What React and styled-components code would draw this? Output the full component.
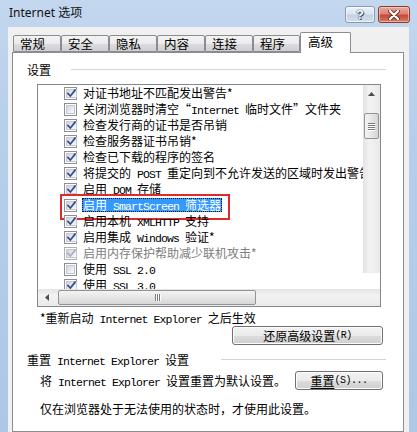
import React from "react";
import styled, { createGlobalStyle, css } from "styled-components";

const Global = createGlobalStyle`
  html, body { margin: 0; padding: 0; background: #b9d0eb; }
  body { font-family: "Noto Sans CJK SC", "Noto Sans", sans-serif; font-size: 12px; color: #000; }
  * { box-sizing: border-box; }
`;

const CJK = `"Noto Sans CJK SC", "Noto Sans", sans-serif`;

const Window = styled.div`
  width: 417px;
  height: 432px;
  overflow: hidden;
  display: flex;
  flex-direction: column;
  padding: 0 8px;
  background: linear-gradient(180deg, #c3d7ef 0%, #b7cfeb 30%, #adc7e7 100%);
`;

const TitleBar = styled.div`
  height: 27px;
  display: flex;
  align-items: center;
  justify-content: space-between;
  flex: none;
`;

const Title = styled.div`
  font-family: "Noto Sans", ${CJK};
  font-size: 12px;
  line-height: 14px;
  padding-left: 1px;
  padding-bottom: 1px;
  color: #111;
`;

const Caption = styled.div`
  display: flex;
  gap: 3px;
  margin-right: -1px;
  padding-top: 2px;
`;

const CaptionButton = styled.div`
  height: 17px;
  width: ${(p) => p.$w}px;
  border-radius: 3px;
  display: flex;
  align-items: center;
  justify-content: center;
  ${(p) =>
    p.$close
      ? css`
          border: 1px solid #8a3a31;
          background: linear-gradient(180deg, #e9a99b 0%, #d98474 45%, #c44a36 55%, #d67a64 100%);
          box-shadow: inset 0 0 0 1px rgba(255, 220, 210, 0.55);
        `
      : css`
          border: 1px solid #8a9bb1;
          background: linear-gradient(180deg, #eef3f9 0%, #d9e4f0 45%, #c3d3e5 55%, #d3dfed 100%);
          box-shadow: inset 0 0 0 1px rgba(255, 255, 255, 0.6);
        `}
`;

const HelpGlyph = styled.span`
  font-family: "Liberation Sans", sans-serif;
  font-weight: bold;
  font-size: 13px;
  line-height: 13px;
  color: #fff;
  text-shadow: 0 0 1px #2d3b4e, 0 0 1px #2d3b4e, 1px 1px 0 #4b5a6e;
`;

const Client = styled.div`
  flex: 1;
  background: #f0f0f0;
  display: flex;
  flex-direction: column;
  padding-top: 5px;
  min-height: 0;
`;

const TabStrip = styled.div`
  display: flex;
  align-items: flex-end;
  height: 21px;
  padding-left: 5px;
  margin-bottom: -1px;
  position: relative;
  z-index: 1;
  flex: none;
`;

const Tab = styled.div`
  width: ${(p) => p.$w}px;
  border: 1px solid #898c95;
  border-radius: 2px 2px 0 0;
  font-family: ${CJK};
  font-size: 12.5px;
  padding-left: 6px;
  display: flex;
  align-items: center;
  ${(p) =>
    p.$active
      ? css`
          height: 21px;
          background: #fff;
          border-bottom: none;
          padding-bottom: 3px;
          padding-left: 7px;
        `
      : css`
          height: 17px;
          margin-bottom: 1px;
          background: linear-gradient(180deg, #f3f3f3 0%, #ebebeb 50%, #dddddd 51%, #cfcfcf 100%);
        `}
`;

const Panel = styled.div`
  flex: 1;
  background: #fff;
  border: 1px solid #898c95;
  margin: 0 5px 0 4px;
  display: flex;
  flex-direction: column;
`;

const GroupHeader = styled.div`
  height: 16px;
  margin-top: ${(p) => p.$top}px;
  padding-left: 14px;
  padding-right: 17px;
  display: flex;
  align-items: center;
  font-family: ${CJK};
  white-space: nowrap;
`;

const GroupLine = styled.div`
  flex: 1;
  height: 1px;
  margin-left: ${(p) => p.$gap}px;
  background: #d5d5d5;
`;

const En = styled.span`
  font-family: "Liberation Mono", monospace;
  font-size: 11.5px;
  letter-spacing: -0.9px;
`;

const ListBox = styled.div`
  margin: 7px 0 0 24px;
  width: 344px;
  height: 223px;
  border: 1px solid #828790;
  display: grid;
  grid-template-columns: 1fr 17px;
  grid-template-rows: 1fr 17px;
  background: #fff;
  flex: none;
`;

const Rows = styled.div`
  overflow: hidden;
  position: relative;
`;

const Row = styled.div`
  height: 16px;
  display: flex;
  align-items: center;
  white-space: nowrap;
  position: relative;
  color: ${(p) => (p.$disabled ? "#7d7d7d" : "#000")};
  ${(p) =>
    p.$marked &&
    css`
      &::after {
        content: "";
        position: absolute;
        left: 22px;
        top: -3px;
        width: 166px;
        height: 22px;
        border: 2px solid #dc2b2b;
        pointer-events: none;
      }
    `}
`;

const Box = styled.span`
  flex: none;
  width: 13px;
  height: 13px;
  margin-left: 26px;
  margin-right: 6px;
  border: 1px solid ${(p) => (p.$disabled ? "#b1b1b1" : "#8f8f8f")};
  background: #fff;
  padding: 1px;
  display: flex;
`;

const BoxInner = styled.span`
  flex: 1;
  background: linear-gradient(135deg, #cfd6e0 0%, #e9edf2 60%, #f8f9fb 100%);
  border: 1px solid #c0c7d2;
  display: flex;
  align-items: center;
  justify-content: center;
`;

const Label = styled.span`
  font-family: ${CJK};
  font-size: 12px;
  line-height: 14px;
  height: 14px;
  display: inline-block;
  padding: 0 1px 0 0;
  ${(p) =>
    p.$selected &&
    css`
      background: #3399ff;
      color: #fff;
      outline: 1px dotted #111;
      outline-offset: -1px;
      padding: 0 1px;
      margin-left: -1px;
    `}
`;

const VScroll = styled.div`
  display: flex;
  flex-direction: column;
`;

const VTrack = styled.div`
  height: 188px;
  background: linear-gradient(90deg, #e4e4e4 0%, #f2f2f2 40%, #eaeaea 100%);
  display: flex;
  flex-direction: column;
  align-items: center;
`;

const ArrowCell = styled.div`
  width: 17px;
  height: 17px;
  display: flex;
  align-items: center;
  justify-content: center;
  flex: none;
`;

const VThumb = styled.div`
  margin-top: 11px;
  width: 15px;
  height: 26px;
  border: 1px solid #939393;
  border-radius: 2px;
  background: linear-gradient(90deg, #f3f3f3 0%, #e6e6e6 50%, #d6d6d6 100%);
  display: flex;
  flex-direction: column;
  align-items: center;
  justify-content: center;
  gap: 1px;
`;

const Grip = styled.span`
  background: #7b7b7b;
  ${(p) =>
    p.$h
      ? css`
          width: 1px;
          height: 7px;
          box-shadow: 1px 0 0 #fff;
        `
      : css`
          width: 7px;
          height: 1px;
          box-shadow: 0 1px 0 #fff;
        `}
`;

const HScroll = styled.div`
  grid-column: 1 / 3;
  display: flex;
  align-items: center;
  background: linear-gradient(180deg, #e4e4e4 0%, #f2f2f2 40%, #eaeaea 100%);
`;

const HThumb = styled.div`
  margin-left: 3px;
  width: 198px;
  height: 15px;
  border: 1px solid #939393;
  border-radius: 2px;
  background: linear-gradient(180deg, #f3f3f3 0%, #e6e6e6 50%, #d6d6d6 100%);
  display: flex;
  align-items: center;
  justify-content: center;
  gap: 1px;
`;

const Note = styled.div`
  margin-top: 4px;
  height: 14px;
  line-height: 14px;
  padding-left: 27px;
  font-family: ${CJK};
  white-space: nowrap;
`;

const ButtonRow = styled.div`
  display: flex;
  align-items: center;
  margin-top: ${(p) => p.$top}px;
  padding-right: 20px;
  height: 19px;
  justify-content: ${(p) => (p.$split ? "space-between" : "flex-end")};
  padding-left: ${(p) => (p.$split ? 27 : 0)}px;
  white-space: nowrap;
`;

const Button = styled.div`
  width: ${(p) => p.$w}px;
  height: 19px;
  border: 1px solid #707070;
  border-radius: 3px;
  background: linear-gradient(180deg, #f2f2f2 0%, #ebebeb 50%, #dddddd 51%, #cfcfcf 100%);
  box-shadow: inset 0 0 0 1px #fcfcfc;
  display: flex;
  align-items: center;
  justify-content: center;
  font-family: ${CJK};
  font-size: 12px;
`;

const Acc = styled.span`
  font-family: "Liberation Mono", monospace;
  font-size: 10px;
  letter-spacing: -0.5px;
`;

const Underline = styled.span`
  text-decoration: underline;
  text-underline-offset: 2px;
`;

const Text = styled.div`
  font-family: ${CJK};
  line-height: 16px;
  height: 16px;
  margin-top: ${(p) => p.$top || 0}px;
  padding-left: ${(p) => p.$indent || 0}px;
  white-space: nowrap;
`;

const Check = ({ disabled }) => (
  <svg width="9" height="9" viewBox="0 0 9 9">
    <path
      d="M1 4.5 L3.4 7 L8 1.2"
      fill="none"
      stroke={disabled ? "#a8aec0" : "#3b4f86"}
      strokeWidth="1.8"
      strokeLinecap="square"
    />
  </svg>
);

const items = [
  { c: true, t: <>对证书地址不匹配发出警告*</> },
  { c: false, t: <>关闭浏览器时清空“<En>Internet </En>临时文件”文件夹</> },
  { c: true, t: <>检查发行商的证书是否吊销</> },
  { c: true, t: <>检查服务器证书吊销*</> },
  { c: true, t: <>检查已下载的程序的签名</> },
  { c: true, t: <>将提交的<En> POST </En>重定向到不允许发送的区域时发出警告</> },
  { c: true, t: <>启用<En> DOM </En>存储</> },
  { c: true, sel: true, t: <>启用<En> SmartScreen </En>筛选器</> },
  { c: true, t: <>启用本机<En> XMLHTTP </En>支持</> },
  { c: true, t: <>启用集成<En> Windows </En>验证*</> },
  { c: true, dis: true, t: <>启用内存保护帮助减少联机攻击*</> },
  { c: false, t: <>使用<En> SSL 2.0</En></> },
  { c: true, t: <>使用<En> SSL 3.0</En></> },
];

const tabs = [
  { t: "常规", w: 48 },
  { t: "安全", w: 48 },
  { t: "隐私", w: 48 },
  { t: "内容", w: 48 },
  { t: "连接", w: 48 },
  { t: "程序", w: 47 },
  { t: "高级", w: 51, a: true },
];

export default function App() {
  return (
    <>
      <Global />
      <Window>
        <TitleBar>
          <Title>Internet 选项</Title>
          <Caption>
            <CaptionButton $w={30}>
              <HelpGlyph>?</HelpGlyph>
            </CaptionButton>
            <CaptionButton $w={32} $close>
              <svg width="12" height="10" viewBox="0 0 12 10">
                <path d="M2 1 L10 9 M10 1 L2 9" stroke="#6b241c" strokeWidth="4" strokeLinecap="round" />
                <path d="M2 1 L10 9 M10 1 L2 9" stroke="#fff" strokeWidth="2.4" strokeLinecap="round" />
              </svg>
            </CaptionButton>
          </Caption>
        </TitleBar>
        <Client>
          <TabStrip>
            {tabs.map((tb) => (
              <Tab key={tb.t} $w={tb.w} $active={tb.a}>
                {tb.t}
              </Tab>
            ))}
          </TabStrip>
          <Panel>
            <GroupHeader $top={8}>
              <span>设置</span>
              <GroupLine $gap={20} />
            </GroupHeader>
            <ListBox>
              <Rows>
                {items.map((it, i) => (
                  <Row key={i} $disabled={it.dis} $marked={it.sel}>
                    <Box $disabled={it.dis}>
                      <BoxInner>{it.c && <Check disabled={it.dis} />}</BoxInner>
                    </Box>
                    <Label $selected={it.sel}>{it.t}</Label>
                  </Row>
                ))}
              </Rows>
              <VScroll>
                <VTrack>
                  <ArrowCell>
                    <svg width="7" height="4" viewBox="0 0 7 4">
                      <path d="M0 4 L3.5 0 L7 4 Z" fill="#4d4d4d" />
                    </svg>
                  </ArrowCell>
                  <VThumb>
                    <Grip />
                    <Grip />
                    <Grip />
                    <Grip />
                  </VThumb>
                </VTrack>
              </VScroll>
              <HScroll>
                <ArrowCell>
                  <svg width="4" height="7" viewBox="0 0 4 7">
                    <path d="M4 0 L0 3.5 L4 7 Z" fill="#4d4d4d" />
                  </svg>
                </ArrowCell>
                <HThumb>
                  <Grip $h />
                  <Grip $h />
                  <Grip $h />
                </HThumb>
              </HScroll>
            </ListBox>
            <Note>
              *重新启动<En> Internet Explorer </En>之后生效
            </Note>
            <ButtonRow $top={1}>
              <Button $w={151}>
                还原高级设置<Acc>(R)</Acc>
              </Button>
            </ButtonRow>
            <GroupHeader $top={6}>
              <span>
                重置<En> Internet Explorer </En>设置
              </span>
              <GroupLine $gap={32} />
            </GroupHeader>
            <ButtonRow $top={4} $split>
              <span>
                将<En> Internet Explorer </En>设置重置为默认设置。
              </span>
              <Button $w={88}>
                <Underline>重置</Underline>
                <Acc>(S)...</Acc>
              </Button>
            </ButtonRow>
            <Text $top={11} $indent={27}>
              仅在浏览器处于无法使用的状态时，才使用此设置。
            </Text>
          </Panel>
        </Client>
      </Window>
    </>
  );
}
